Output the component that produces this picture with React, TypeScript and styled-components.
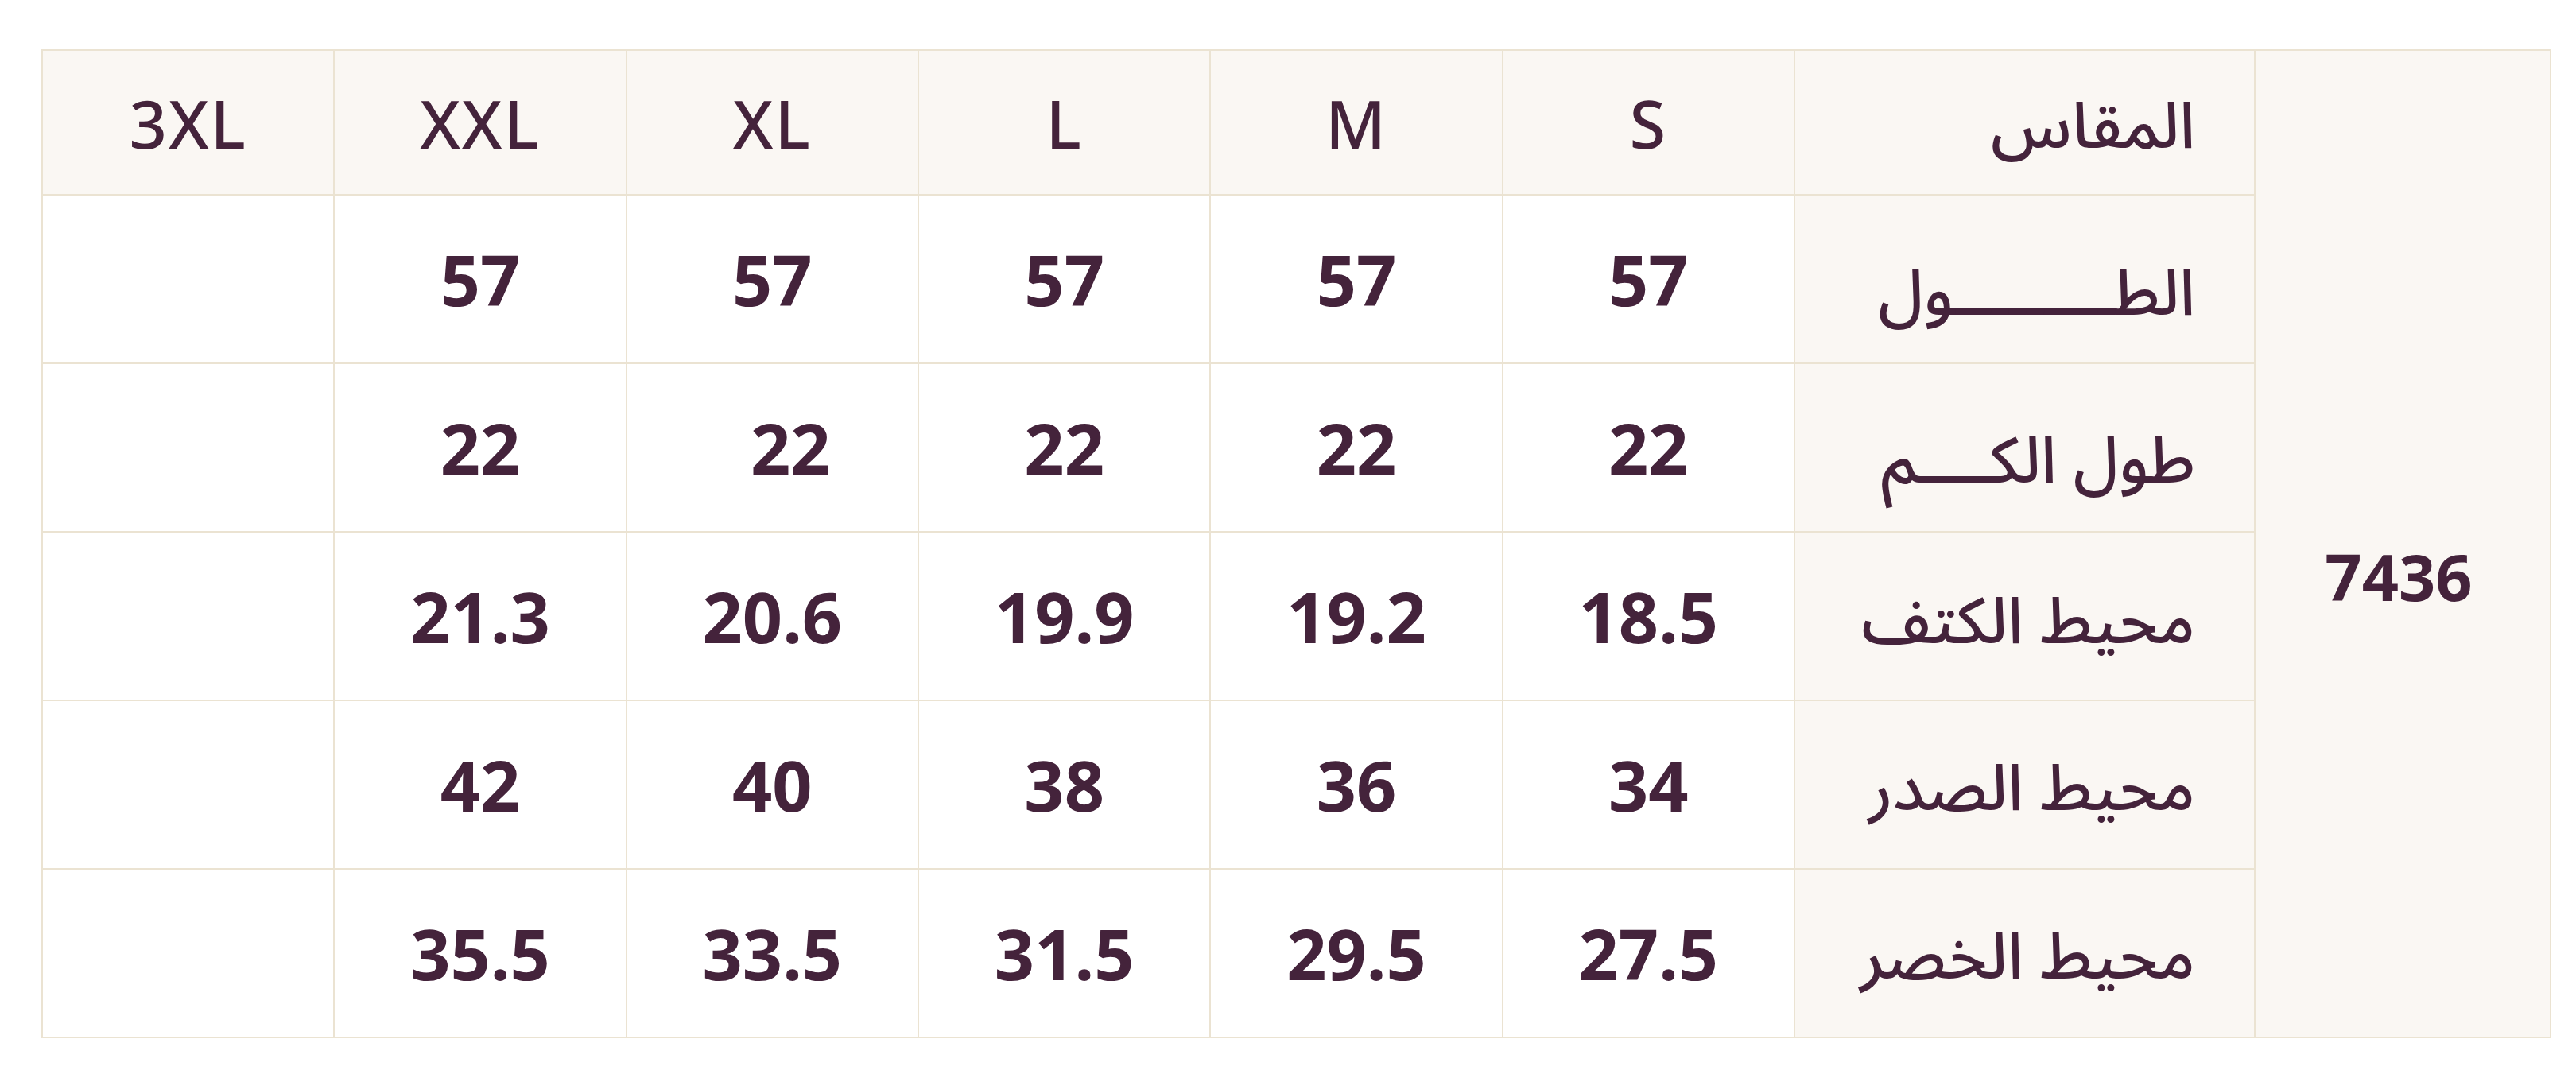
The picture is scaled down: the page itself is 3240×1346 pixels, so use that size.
import styled, { createGlobalStyle } from "styled-components";

const GlobalStyle = createGlobalStyle`
  html, body {
    margin: 0;
    padding: 0;
    background: #ffffff;
  }
  body {
    font-family: "Noto Sans", "Open Sans", "Noto Sans Arabic", "DejaVu Sans", sans-serif;
    color: #44233b;
  }
`;

const Page = styled.main`
  padding: 62px 31px 40px 52px;
`;

const Chart = styled.div`
  direction: rtl;
  width: 3157px;
  box-sizing: border-box;
  display: grid;
  grid-template-columns: 370px 577px repeat(6, 1fr);
  grid-template-rows: 180px repeat(5, 210px);
  gap: 2px;
  padding: 2px;
  background: #ebe3d2;
`;

const Code = styled.div`
  grid-row: 1 / span 6;
  display: flex;
  align-items: center;
  justify-content: center;
  padding-top: 80px;
  padding-right: 10px;
  background: #faf7f3;
  font-size: 81px;
  font-weight: 700;
  line-height: 1;
`;

const Label = styled.div<{ $shift?: number }>`
  display: flex;
  align-items: center;
  justify-content: flex-start;
  padding-inline-start: 74px;
  padding-top: ${(p) => p.$shift ?? 0}px;
  background: #faf7f3;
  font-size: 81px;
  font-weight: 500;
  line-height: 1;
  white-space: nowrap;
`;

const SizeHead = styled.div`
  display: flex;
  align-items: center;
  justify-content: center;
  background: #faf7f3;
  font-size: 83px;
  font-weight: 500;
  letter-spacing: 2px;
  line-height: 1;
`;

const Value = styled.div`
  display: flex;
  align-items: center;
  justify-content: center;
  background: #ffffff;
  font-size: 88px;
  font-weight: 700;
  line-height: 1;
  white-space: pre;
`;

const sizes = ["S", "M", "L", "XL", "XXL", "3XL"];

const rows: { label: string; shift: number; values: string[] }[] = [
  { label: "الطـــــــــول", shift: 26, values: ["57", "57", "57", "57", "57", ""] },
  { label: "طول الكــــم", shift: 24, values: ["22", "22", "22", "22\u00a0\u00a0", "22", ""] },
  { label: "محيط الكتف", shift: 4, values: ["18.5", "19.2", "19.9", "20.6", "21.3", ""] },
  { label: "محيط الصدر", shift: -4, values: ["34", "36", "38", "40", "42", ""] },
  { label: "محيط الخصر", shift: -10, values: ["27.5", "29.5", "31.5", "33.5", "35.5", ""] },
];

export default function App() {
  return (
    <>
      <GlobalStyle />
      <Page>
        <Chart>
          <Code>7436</Code>
          <Label>المقاس</Label>
          {sizes.map((s) => (
            <SizeHead key={s}>{s}</SizeHead>
          ))}
          {rows.map((r) => (
            <Row key={r.label} label={r.label} shift={r.shift} values={r.values} />
          ))}
        </Chart>
      </Page>
    </>
  );
}

function Row({ label, shift, values }: { label: string; shift: number; values: string[] }) {
  return (
    <>
      <Label $shift={shift}>{label}</Label>
      {values.map((v, i) => (
        <Value key={i}>{v}</Value>
      ))}
    </>
  );
}
